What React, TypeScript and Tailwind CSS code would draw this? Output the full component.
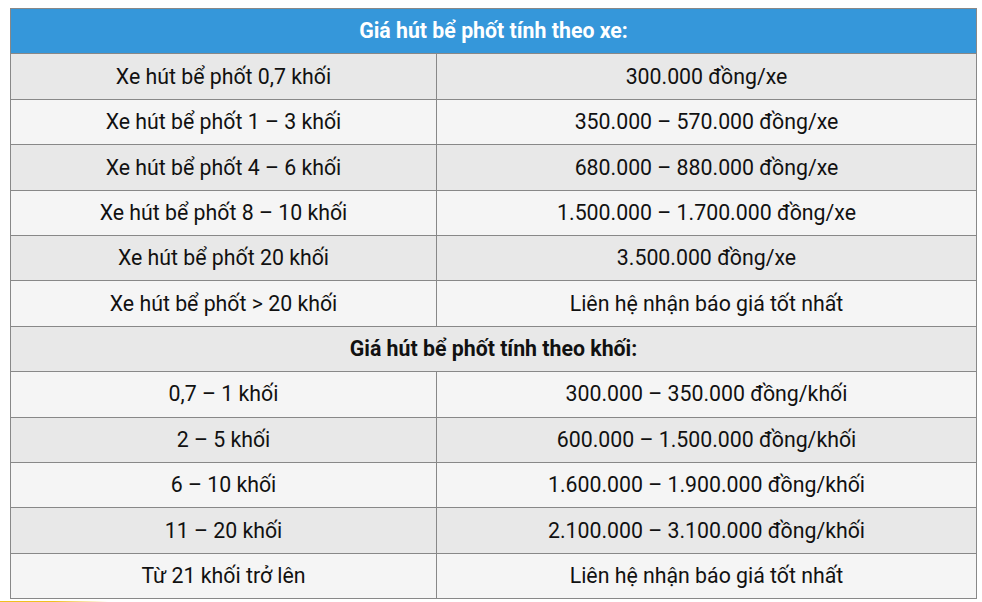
const byTruck: [string, string][] = [
  ['Xe hút bể phốt 0,7 khối', '300.000 đồng/xe'],
  ['Xe hút bể phốt 1 – 3 khối', '350.000 – 570.000 đồng/xe'],
  ['Xe hút bể phốt 4 – 6 khối', '680.000 – 880.000 đồng/xe'],
  ['Xe hút bể phốt 8 – 10 khối', '1.500.000 – 1.700.000 đồng/xe'],
  ['Xe hút bể phốt 20 khối', '3.500.000 đồng/xe'],
  ['Xe hút bể phốt > 20 khối', 'Liên hệ nhận báo giá tốt nhất'],
];

const byVolume: [string, string][] = [
  ['0,7 – 1 khối', '300.000 – 350.000 đồng/khối'],
  ['2 – 5 khối', '600.000 – 1.500.000 đồng/khối'],
  ['6 – 10 khối', '1.600.000 – 1.900.000 đồng/khối'],
  ['11 – 20 khối', '2.100.000 – 3.100.000 đồng/khối'],
  ['Từ 21 khối trở lên', 'Liên hệ nhận báo giá tốt nhất'],
];

function Row({ left, right, odd }: { left: string; right: string; odd: boolean }) {
  return (
    <tr className={odd ? 'bg-[#e8e8e8]' : 'bg-[#f5f5f5]'}>
      <td className="h-[45.4px] border border-[#888] text-center align-middle">{left}</td>
      <td className="h-[45.4px] border border-[#888] text-center align-middle">{right}</td>
    </tr>
  );
}

export default function App() {
  return (
    <div className="min-h-screen bg-white pt-2 pl-[10px] pr-[5px] font-['Roboto',sans-serif] text-[21.3px] leading-[1.3] text-[#111]">
      <table className="w-[967px] table-fixed border-collapse border border-[#888]">
        <colgroup>
          <col className="w-[426px]" />
          <col />
        </colgroup>
        <tbody>
          <tr className="bg-[#3597da]">
            <td colSpan={2} className="h-[45.4px] border border-[#888] text-center align-middle font-bold text-white">
              Giá hút bể phốt tính theo xe:
            </td>
          </tr>
          {byTruck.map(([l, r], i) => (
            <Row key={l} left={l} right={r} odd={i % 2 === 0} />
          ))}
          <tr className="bg-[#e8e8e8]">
            <td colSpan={2} className="h-[45.4px] border border-[#888] text-center align-middle font-bold">
              Giá hút bể phốt tính theo khối:
            </td>
          </tr>
          {byVolume.map(([l, r], i) => (
            <Row key={l} left={l} right={r} odd={i % 2 === 1} />
          ))}
        </tbody>
      </table>
      <div className="-ml-[10px] mt-[2px] h-[2px] w-[108px] bg-gradient-to-r from-[#f0c020] via-[#f0c020] to-transparent" />
    </div>
  );
}
